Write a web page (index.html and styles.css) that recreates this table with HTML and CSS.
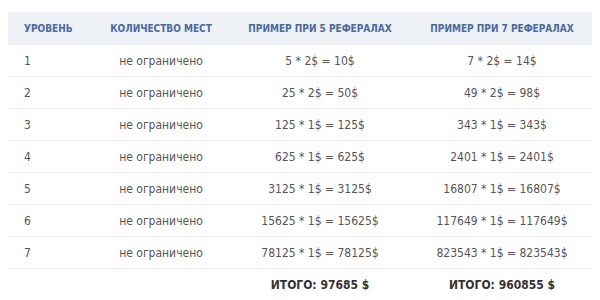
FILE: index.html
```
<!DOCTYPE html>
<html lang="ru">
<head>
<meta charset="utf-8">
<link rel="stylesheet" href="styles.css">
</head>
<body>
<table class="ref">
  <thead>
    <tr>
      <th class="lvl c1">Уровень</th>
      <th class="c2">Количество мест</th>
      <th class="c3">Пример при 5 рефералах</th>
      <th class="c4">Пример при 7 рефералах</th>
    </tr>
  </thead>
  <tbody>
    <tr><td class="lvl">1</td><td>не ограничено</td><td>5 * 2$ = 10$</td><td>7 * 2$ = 14$</td></tr>
    <tr><td class="lvl">2</td><td>не ограничено</td><td>25 * 2$ = 50$</td><td>49 * 2$ = 98$</td></tr>
    <tr><td class="lvl">3</td><td>не ограничено</td><td>125 * 1$ = 125$</td><td>343 * 1$ = 343$</td></tr>
    <tr><td class="lvl">4</td><td>не ограничено</td><td>625 * 1$ = 625$</td><td>2401 * 1$ = 2401$</td></tr>
    <tr><td class="lvl">5</td><td>не ограничено</td><td>3125 * 1$ = 3125$</td><td>16807 * 1$ = 16807$</td></tr>
    <tr><td class="lvl">6</td><td>не ограничено</td><td>15625 * 1$ = 15625$</td><td>117649 * 1$ = 117649$</td></tr>
    <tr><td class="lvl">7</td><td>не ограничено</td><td>78125 * 1$ = 78125$</td><td>823543 * 1$ = 823543$</td></tr>
    <tr class="total"><td class="lvl"></td><td></td><td>ИТОГО: 97685 $</td><td>ИТОГО: 960855 $</td></tr>
  </tbody>
</table>
</body>
</html>
```
FILE: styles.css
```
body {
  margin: 8px;
  background: #fff;
  font-family: "DejaVu Sans Condensed", "DejaVu Sans", sans-serif;
}
.ref {
  width: 584px;
  margin-top: 4px;
  border-collapse: collapse;
  table-layout: fixed;
}
.ref .c1 { width: 70px; }
.ref .c2 { width: 134px; }
.ref .c3 { width: 184px; }
.ref .c4 { width: 180px; }
.ref th {
  background: #edf0f5;
  color: #4a6a9a;
  font-size: 10px;
  font-weight: bold;
  text-transform: uppercase;
  height: 33px;
  padding: 0;
  text-align: center;
}
.ref td {
  color: #555;
  font-size: 12px;
  height: 31px;
  padding: 0;
  text-align: center;
  border-bottom: 1px solid #e8ebef;
}
.ref .lvl {
  text-align: left;
  padding-left: 16px;
}
.ref .total td {
  border-bottom: none;
  color: #333;
  font-weight: bold;
}
```
